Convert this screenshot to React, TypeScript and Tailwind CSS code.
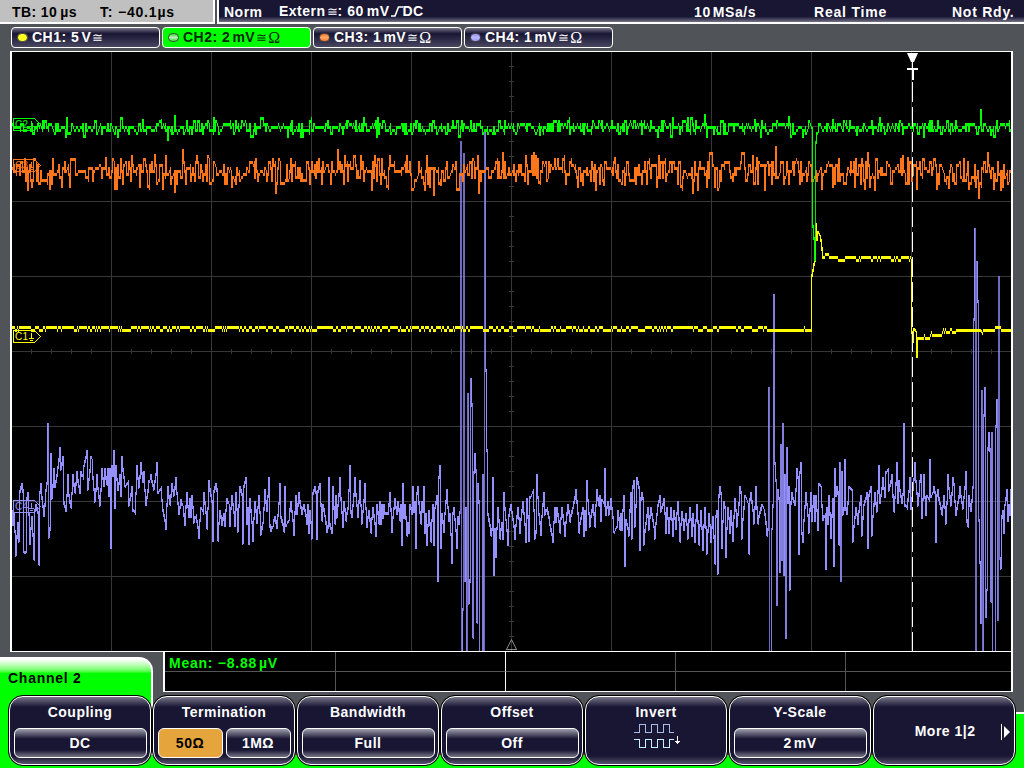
import type { ReactNode } from 'react'

type Point = [number, number]

const GREEN = '#00ff00'
const ORANGE = '#ff751a'
const YELLOW = '#ffff00'
const PURPLE = '#9490ff'

// small seeded generator, keeps the noise floor the same on every render
function rng(seed: number) {
  let s = seed
  return () => {
    s = (s * 1664525 + 1013904223) % 4294967296
    return s / 4294967296
  }
}

function noise(seed: number, center: number, spread: number, fixed: Record<number, number> = {}) {
  const rand = rng(seed)
  const out: Point[] = []
  for (let x = 12; x <= 1011; x++) {
    const g = rand() + rand() + rand() + rand() - 2
    const prev = out.length ? out[out.length - 1][1] : center
    const hold = rand() < 0.2
    const y = center + Math.round((g * spread) / 3) * 3
    out.push([x, fixed[x] ?? (hold && !(x - 1 in fixed) ? prev : y)])
  }
  return out
}

// One column per pixel, each column joins two neighbouring samples.
// With a rest level, samples between two extremes lean to the one nearer to it.
function columns(points: Point[], rest?: number) {
  let bright = ''
  let mid = ''
  let dim = ''
  let i = 0
  const at = (x: number) => {
    while (i < points.length - 2 && points[i + 1][0] <= x) i++
    const [x0, y0] = points[i]
    const [x1, y1] = points[i + 1]
    const y = y0 + ((y1 - y0) * (x - x0)) / (x1 - x0)
    if (rest === undefined || x === x0 || x === x1) return y
    const near = Math.abs(y0 - rest) < Math.abs(y1 - rest) ? y0 : y1
    const lean = Math.abs(y1 - y0) > 50 ? 0.8 : 0.15
    return y * (1 - lean) + near * lean
  }
  const end = points[points.length - 1][0]
  let prev = at(points[0][0])
  for (let x = points[0][0]; x < end; x++) {
    const next = at(x + 1)
    const diff = Math.abs(next - prev)
    const step = diff <= 3
    const top = Math.round((step ? prev : Math.min(prev, next)) - 1.5)
    const h = step ? 3 : Math.round(diff) + 3
    const seg = `M${x + 0.5} ${top}v${h}`
    if (h > 260) dim += seg
    else if (h > 110) mid += seg
    else bright += seg
    prev = next
  }
  return { bright, mid, dim }
}

const ch2 = columns(
  noise(77, 127, 6.2, {
    143: 120, 161: 120, 175: 116, 177: 133, 311: 118, 540: 134, 658: 136, 705: 115, 755: 120,
    789: 117, 794: 133, 811: 127, 812: 128, 813: 226, 814: 238, 815: 259, 816: 142, 817: 133, 818: 131,
    833: 120, 857: 134, 981: 110, 991: 134,
  }),
)

const ch3 = columns(
  noise(2031, 171, 13, {
    32: 186, 50: 188, 70: 186, 106: 158, 115: 188, 117: 188, 121: 159, 149: 188, 155: 155, 163: 188,
    175: 191, 183: 150, 197: 156, 232: 186, 388: 188, 434: 194, 441: 184, 503: 153, 539: 182, 558: 159,
    583: 184, 604: 184, 615: 158, 625: 184, 753: 156, 757: 158, 796: 159, 822: 188, 865: 188, 877: 159,
    908: 158, 917: 188, 937: 188, 949: 187, 969: 188, 976: 186, 979: 197, 981: 186, 994: 188,
  }),
)

const ch1 = (() => {
  const rand = rng(41)
  const out: Point[] = []
  let y = 327
  for (let x = 12; x < 768; x++) {
    if (rand() < (y === 327 ? 0.24 : 0.4)) y = y === 327 ? 330 : 327
    out.push([x, y])
  }
  out.push([768, 330], [803, 330], [804, 327], [805, 330], [811, 330], [812, 275])
  out.push([813, 270], [814, 264], [815, 260], [816, 224], [817, 239], [818, 232], [820, 236], [821, 240], [823, 257], [824, 257], [825, 254], [828, 254], [829, 257])
  for (let x = 830; x < 911; x++) {
    const low = out[out.length - 1][1] === 260
    out.push([x, rand() < (low ? 0.4 : 0.8) ? 257 : 260])
  }
  out.push([911, 260], [912, 332], [913, 341], [914, 329], [916, 332], [917, 356], [918, 338])
  for (let x = 919; x < 956; x++) {
    const base = x < 930 ? 338 : x < 943 ? 335 : 332
    out.push([x, rand() < 0.2 ? base + (x < 924 ? 3 : -3) : base])
  }
  out.push([956, 330], [980, 330], [982, 333], [983, 330], [994, 330], [995, 327], [1000, 327], [1001, 330], [1011, 330])
  return columns(out)
})()

// extremes of the CH4 trace as x,y pairs
const CH4 = `12,511 13,524 14,514 16,555 18,523 19,541 22,484 24,552 26,552 28,493 30,543 32,517 34,559 36,505 39,564
41,484 44,516 46,490 48,424 49,537 51,454 52,498 54,469 55,486 57,475 60,448 61,469 63,457 66,510 68,475 69,495 71,507
73,475 75,492 77,472 80,492 81,472 83,478 84,466 87,451 88,489 91,457 92,460 95,501 97,475 100,505 102,469 104,485
105,469 107,484 108,469 109,495 110,469 111,547 112,466 113,475 114,451 115,507 116,466 118,489 120,475 121,495
122,457 125,486 128,481 129,505 132,487 133,510 135,513 137,466 139,487 141,463 143,481 144,472 146,504 149,481
151,475 154,489 157,463 158,492 161,487 163,510 166,529 168,487 170,504 172,484 174,495 176,478 179,513 181,500
183,507 185,525 187,493 189,516 190,499 191,516 192,496 194,522 196,515 199,537 201,508 203,513 204,493 207,528
209,481 212,501 213,540 216,484 218,540 220,511 222,525 224,514 225,525 227,499 229,505 230,525 232,496 235,525
236,493 238,531 240,487 243,543 246,478 247,523 248,508 249,543 250,499 253,540 255,502 257,522 259,496 261,534
263,523 265,490 267,510 269,478 271,531 273,525 275,517 277,528 280,484 281,517 284,531 285,487 286,525 289,520
291,502 294,535 296,496 297,513 299,493 302,513 304,505 307,523 308,505 309,532 310,511 312,538 315,487 317,538
320,484 322,520 323,505 325,516 327,532 329,478 332,532 333,487 335,523 336,496 337,517 340,478 343,526 344,502
346,520 348,508 350,466 352,517 355,478 358,517 360,481 362,523 365,484 367,526 369,511 371,532 373,508 376,535
377,505 379,523 380,502 381,523 382,505 383,517 384,505 385,513 388,513 390,493 392,532 395,499 397,513 398,502
400,520 401,505 402,544 403,484 404,517 405,505 407,535 408,523 409,532 410,505 412,513 413,487 414,511 415,502
416,547 418,487 421,523 422,502 423,511 424,487 425,532 426,514 427,544 429,511 431,541 433,505 434,544 435,508
437,496 438,580 440,466 441,547 442,514 444,532 447,490 449,520 450,514 452,562 454,508 457,547 458,517 459,523
460,512 461,142 462,660 464,154 465,580 466,508 467,660 468,394 469,603 471,379 473,637 475,454 477,622 478,484
480,660 482,660 483,475 484,660 485,130 486,370 487,450 488,514 491,535 493,478 494,574 495,529 496,556 498,508
500,538 502,523 503,538 504,493 506,520 508,544 509,515 511,505 515,538 518,508 520,532 523,502 526,541 527,499
529,541 533,490 535,538 537,475 539,514 541,535 544,493 545,514 547,508 550,525 553,541 555,508 556,521 557,508
560,532 562,508 565,535 568,505 570,521 573,508 576,490 579,532 583,508 584,535 585,511 586,529 587,481 590,526
593,505 595,526 597,490 599,505 600,496 601,520 602,500 604,505 605,469 606,514 608,502 609,514 611,499 614,532
617,526 618,511 620,529 621,514 622,529 624,496 625,565 626,520 629,535 631,493 632,538 634,481 635,526 637,478
640,550 642,493 644,544 648,508 649,529 651,508 655,538 658,505 660,496 661,511 664,499 666,532 667,508 669,532
671,508 673,535 674,511 676,528 678,502 680,541 682,512 684,529 686,514 688,538 690,508 692,535 693,514 695,541
697,505 699,544 701,511 703,550 705,508 707,553 709,514 711,541 713,517 715,563 717,511 718,573 720,487 722,547
724,502 726,556 728,508 730,532 731,511 733,541 735,499 737,526 740,487 742,538 745,496 749,553 751,493 754,523
756,487 758,523 762,505 765,514 767,535 768,529 769,388 770,660 771,660 772,529 774,295 775,463 776,480 777,604
778,490 780,571 781,445 782,559 783,424 784,574 785,475 786,637 787,448 788,502 789,487 790,589 792,493 795,505
797,469 799,553 801,463 803,541 806,493 809,532 811,493 812,520 814,496 815,520 816,496 818,529 819,484 821,487
823,520 825,514 826,568 827,508 828,523 829,496 831,538 833,499 834,565 835,469 836,495 837,487 839,544 840,463
841,580 842,472 843,514 845,460 847,514 849,487 852,490 853,541 856,508 858,523 861,496 862,535 864,505 867,493
868,547 871,487 872,535 875,493 877,511 879,466 880,502 883,478 885,496 886,472 888,469 889,490 892,475 894,511
897,463 898,502 899,481 902,502 904,424 905,505 907,508 910,478 911,508 915,463 918,505 920,481 921,475 922,517
924,475 926,514 927,496 929,500 930,460 931,496 934,487 936,541 938,490 942,514 944,496 946,523 948,475 951,505
953,478 954,484 956,514 960,487 963,508 966,472 968,526 969,496 971,511 973,487 974,319 975,229 976,660 977,262
978,301 979,520 980,562 981,622 982,391 983,660 985,388 986,616 987,590 989,433 991,601 992,433 993,660 995,660
997,400 998,619 999,277 1000,558 1001,568 1003,511 1004,532 1005,505 1007,490 1008,520 1009,505 1010,514 1011,490`

const ch4 = columns(
  CH4.split(/\s+/).map((p) => p.split(',').map(Number) as Point),
  507,
)

function Trace({ data, color }: { data: ReturnType<typeof columns>; color: string }) {
  return (
    <g stroke={color} strokeWidth={1} fill="none" shapeRendering="crispEdges">
      <path d={data.dim} opacity={0.75} />
      <path d={data.mid} opacity={0.88} />
      <path d={data.bright} />
    </g>
  )
}

function Marker({ y, n, color }: { y: number; n: number; color: string }) {
  return (
    <g fill="none" stroke={color} shapeRendering="crispEdges">
      <path d={`M13.5 ${y}.5h21l6 6l-6 6h-21z`} />
      <path d={`M31.5 ${y + 3}v6M29 ${y + 8}.5h5M30 ${y + 10}.5h3`} />
      <text x={15} y={y + 10} fill={color} stroke="none" fontSize={10} letterSpacing={0.2} className="font-['Liberation_Sans',sans-serif]">
        C{n}
      </text>
    </g>
  )
}

function Grid() {
  let d = ''
  for (let x = 111; x < 1011; x += 100) d += `M${x}.5 52v599`
  for (let y = 126; y < 651; y += 75) d += `M12 ${y}.5h999`
  for (let x = 31; x < 1011; x += 20) d += `M${x}.5 349v5`
  for (let y = 66; y < 651; y += 15) d += `M509 ${y}.5h5`
  return <path d={d} stroke="#373737" fill="none" shapeRendering="crispEdges" />
}

function Screen() {
  return (
    <div className="ml-[10px] h-[601px] w-[1003px] border-x-2 border-y border-white bg-black">
      <svg viewBox="12 52 999 599" className="block h-[599px] w-[999px]">
        <Grid />
        <path d="M506 649.5h11M506.5 649.5l5 -10l5 10" stroke="#8a8a8a" fill="none" />
        <Trace data={ch4} color={PURPLE} />
        <Trace data={ch3} color={ORANGE} />
        <Trace data={ch1} color={YELLOW} />
        <Trace data={ch2} color={GREEN} />
        <Marker y={118} n={2} color={GREEN} />
        <Marker y={159} n={3} color={ORANGE} />
        <Marker y={330} n={1} color={YELLOW} />
        <Marker y={500} n={4} color={PURPLE} />
        <path d="M912.5 82V651" stroke="#fff" strokeDasharray="20 5" shapeRendering="crispEdges" />
        <path d="M907 53h11l-4 9h-3z" fill="#fff" />
        <path d="M912.5 62v7" stroke="#fff" shapeRendering="crispEdges" />
        <path d="M907 69h11M912.5 69v11" stroke="#fff" strokeWidth={2} shapeRendering="crispEdges" />
      </svg>
    </div>
  )
}

const Approx = () => (
  <span className="ml-px font-['Liberation_Serif',serif] text-[13px] leading-none font-normal tracking-normal">≅</span>
)
const Ohm = () => (
  <span className="ml-px font-['Liberation_Serif',serif] text-[16px] leading-none font-normal tracking-normal">Ω</span>
)

function Header() {
  return (
    <div className="flex h-6 gap-[2px] bg-[#505458] text-[14px] leading-6 font-bold whitespace-pre">
      <div className="flex w-[215px] border-r-2 border-b-2 border-white bg-[#c0c0c0] pl-3 text-black">
        <span className="w-[88px] tracking-[0.4px]">TB: 10<span className="ml-[3px]">µs</span></span>
        <span className="tracking-[0.8px]">T: −40.1<span>µs</span></span>
      </div>
      <div className="flex flex-1 border-b-2 border-l-2 border-white bg-linear-to-b from-[#191634] from-75% to-[#777487] pl-[5px] text-white">
        <span className="w-[55px] tracking-[0.5px]">Norm</span>
        <span className="flex w-[415px] items-center tracking-[0.5px]">
          Extern<Approx />: 60<span className="ml-[3px]">mV</span>
          <svg className="h-[11px] w-[13px]" viewBox="0 0 13 11" fill="none" stroke="#fff" strokeWidth={1.6}>
            <path d="M1 10h4L8.5 1H13" />
          </svg>
          DC
        </span>
        <span className="w-[120px] tracking-[0.6px]">10<span className="ml-[2px]">MSa/s</span></span>
        <span className="w-[138px] tracking-[0.8px]">Real Time</span>
        <span className="tracking-[0.75px]">Not Rdy.</span>
      </div>
    </div>
  )
}

const CHANNELS = [
  { name: 'CH1', value: '5', unit: 'V', color: 'bg-[#ffff20]', ohm: false },
  { name: 'CH2', value: '2', unit: 'mV', color: 'bg-linear-to-b from-[#20d820] via-[#b8f0b8] to-[#20d820]', ohm: true, active: true },
  { name: 'CH3', value: '1', unit: 'mV', color: 'bg-linear-to-b from-[#ff751a] via-[#ffa868] to-[#ff751a]', ohm: true },
  { name: 'CH4', value: '1', unit: 'mV', color: 'bg-linear-to-b from-[#9490ff] via-[#bcbaff] to-[#9490ff]', ohm: true },
]

function ChannelBar() {
  return (
    <div className="flex h-[27px] gap-[2px] pt-[3px] pl-[11px]">
      {CHANNELS.map((c) => (
        <div
          key={c.name}
          className={`flex h-[21px] w-[149px] items-center rounded-[4px] border-[1.5px] border-white pl-[5px] text-[14px] font-bold whitespace-pre ${
            c.active
              ? 'bg-[#00ff00] text-[#062806]'
              : 'bg-linear-to-b from-[#777487] via-[#191634] via-30% to-[#4a4760] text-white'
          }`}
        >
          <span className={`mr-[4px] h-[9px] w-[11px] rounded-full border border-[#454545] ${c.color}`} />
          <span className="tracking-[0.5px]">
            {c.name}: {c.value}
            <span className="ml-[2px]">{c.unit}</span>
          </span>
          <Approx />
          {c.ohm && <Ohm />}
        </div>
      ))}
    </div>
  )
}

function Measurements() {
  return (
    <div className="ml-[163px] grid h-10 w-[850px] grid-cols-[171px_170px_170px_170px_1fr] grid-rows-[20px_19px] border-r-2 border-b border-l-2 border-white bg-black">
      {Array.from({ length: 10 }, (_, i) => (
        <div
          key={i}
          className={`${i % 5 < 4 ? 'border-r' : ''} ${i % 5 === 1 ? 'border-r-white' : 'border-r-[#555555]'} ${
            i < 5 ? 'border-b border-b-[#555555]' : ''
          }`}
        >
          {i === 0 && (
            <span className="block pl-[4px] text-[14px] leading-[22px] font-bold tracking-[0.75px] whitespace-pre text-[#00ff00]">
              Mean: −8.88<span className="ml-[2px]">µV</span>
            </span>
          )}
        </div>
      ))}
    </div>
  )
}

function Value({ children, selected }: { children: ReactNode; selected?: boolean }) {
  return (
    <div
      className={`flex h-[30px] flex-1 items-center justify-center rounded-[6px] border-[1.5px] border-white pt-px text-[14px] font-bold whitespace-pre ${
        selected
          ? 'bg-[#e6a53c] text-black'
          : 'bg-[linear-gradient(#a09eac,#191634_35%,#191634_75%,#777487)] text-white'
      }`}
    >
      {children}
    </div>
  )
}

function Softkey({ title, children }: { title?: string; children: ReactNode }) {
  return (
    <div className="h-[71px] w-36 rounded-[15px] border border-black bg-black">
      <div className="flex h-full flex-col rounded-[14px] border-[1.5px] border-white bg-[linear-gradient(#777487,#191634_15%,#191634_88%,#55526a)] px-[3.5px] text-center text-[14px] font-bold tracking-[0.5px] text-white">
        {title && <div className="mt-[5px] h-5 leading-5">{title}</div>}
        {children}
      </div>
    </div>
  )
}

function Softkeys() {
  return (
    <div className="relative flex pl-2">
      <Softkey title="Coupling">
        <div className="mt-[6px] flex"><Value>DC</Value></div>
      </Softkey>
      <Softkey title="Termination">
        <div className="mt-[6px] flex gap-[3px]">
          <Value selected>50Ω</Value>
          <Value>1MΩ</Value>
        </div>
      </Softkey>
      <Softkey title="Bandwidth">
        <div className="mt-[6px] flex"><Value>Full</Value></div>
      </Softkey>
      <Softkey title="Offset">
        <div className="mt-[6px] flex"><Value>Off</Value></div>
      </Softkey>
      <Softkey title="Invert">
        <svg className="ml-[44px] h-7 w-12" viewBox="0 0 48 28" fill="none" shapeRendering="crispEdges">
          <path d="M0 10.5h5.5v-8h6v8h6v-8h6v8h6v-8h6v8h4" stroke="#a9bce8" />
          <path d="M0 17.5h5.5v8h6v-8h6v8h6v-8h6v8h6v-8h4" stroke="#c4f0ff" />
          <path d="M43.5 14v8M41 19.5h5M42 20.5h3" stroke="#fff" />
        </svg>
      </Softkey>
      <Softkey title="Y-Scale">
        <div className="mt-[6px] flex"><Value>2<span className="ml-[2px]">mV</span></Value></div>
      </Softkey>
      <Softkey>
        <div className="flex h-full items-center justify-end gap-[25px] pt-[2px] pr-[1px]">
          <span>More 1|2</span>
          <svg className="h-4 w-[9px]" viewBox="0 0 9 16">
            <path d="M0.5 0v16" stroke="#fff" shapeRendering="crispEdges" />
            <path d="M3 2l6 6l-6 6z" fill="#fff" />
          </svg>
        </div>
      </Softkey>
    </div>
  )
}

export default function App() {
  return (
    <div className="relative h-[768px] w-[1024px] overflow-hidden bg-[#505458] font-['Liberation_Sans',Arial,sans-serif]">
      <Header />
      <ChannelBar />
      <Screen />
      <Measurements />
      {/* channel tab and the green strip behind the softkeys */}
      <div className="absolute top-[657px] left-0 h-[111px] w-[153px] rounded-tr-[14px] border-t-2 border-r-2 border-white bg-linear-to-b from-white to-[#00ff00] to-[14px] pt-[9px] pl-2 text-[14px] font-bold tracking-[0.75px] text-black">
        Channel 2
      </div>
      <div className="absolute top-[755px] left-0 h-[13px] w-full bg-[#00ff00]" />
      <div className="absolute top-[712px] right-0 h-14 w-[12px] border-t-2 border-white bg-[#00ff00]" />
      <div className="pt-[3px]">
        <Softkeys />
      </div>
    </div>
  )
}
